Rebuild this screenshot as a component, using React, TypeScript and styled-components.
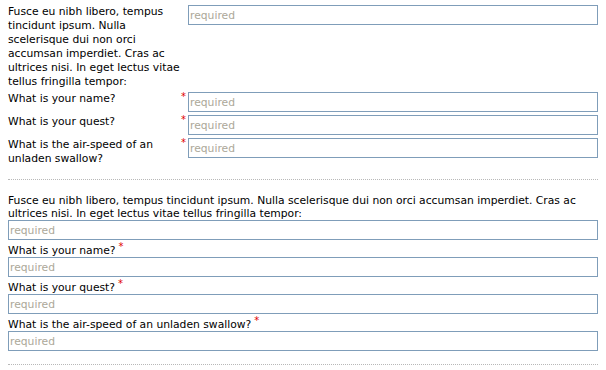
import React from "react";
import styled, { createGlobalStyle } from "styled-components";

const GlobalStyle = createGlobalStyle`
  html, body {
    margin: 0;
    padding: 0;
    background: #ffffff;
  }
  body {
    padding: 5px 8px 0 8px;
    font-family: Tahoma, "DejaVu Sans", Verdana, sans-serif;
    font-size: 10.75px;
    color: #000000;
  }
`;

const Page = styled.div`
  width: 590px;
`;

const TableForm = styled.div`
  display: grid;
  grid-template-columns: 173px 7px 1fr;
  row-gap: 3px;
  align-items: start;
`;

const LabelCell = styled.label`
  line-height: 14px;
`;

const ReqCell = styled.span`
  color: #e00000;
  font-size: 10px;
  line-height: 8px;
  display: block;
  padding-top: 1px;
`;

const TextInput = styled.input`
  box-sizing: border-box;
  width: 100%;
  height: 20px;
  margin: 0;
  padding: 0 1px;
  border: 1px solid #7f9db9;
  border-radius: 0;
  background: #ffffff;
  font-family: Tahoma, "DejaVu Sans", Verdana, sans-serif;
  font-size: 10.75px;
  color: #000;
  outline: none;
  &::placeholder {
    color: #aca899;
    opacity: 1;
  }
`;

const Divider = styled.hr`
  margin: 13px 0 0 0;
  border: 0;
  border-top: 1px dotted #b8b8b8;
  height: 0;
`;

const StackedForm = styled.div`
  display: flex;
  flex-direction: column;
  padding-top: 14px;
`;

const Field = styled.div`
  display: flex;
  flex-direction: column;
`;

const FieldLabel = styled.label<{ $first?: boolean }>`
  line-height: 13px;
  padding-top: ${(p) => (p.$first ? "0" : "4px")};
`;

const Asterisk = styled.span`
  color: #e00000;
  font-size: 10px;
  margin-left: 3px;
  vertical-align: 4px;
  line-height: 0;
`;

const intro =
  "Fusce eu nibh libero, tempus tincidunt ipsum. Nulla scelerisque dui non orci accumsan imperdiet. Cras ac ultrices nisi. In eget lectus vitae tellus fringilla tempor:";

type Q = { label: string; required: boolean };

const questions: Q[] = [
  { label: intro, required: false },
  { label: "What is your name?", required: true },
  { label: "What is your quest?", required: true },
  { label: "What is the air-speed of an unladen swallow?", required: true },
];

export default function App() {
  return (
    <>
      <GlobalStyle />
      <Page>
        <TableForm>
          {questions.map((q, i) => (
            <React.Fragment key={i}>
              <LabelCell>{q.label}</LabelCell>
              <ReqCell>{q.required ? "*" : ""}</ReqCell>
              <TextInput placeholder="required" />
            </React.Fragment>
          ))}
        </TableForm>
        <Divider />
        <StackedForm>
          {questions.map((q, i) => (
            <Field key={i}>
              <FieldLabel $first={i === 0}>
                {q.label}
                {q.required && <Asterisk>*</Asterisk>}
              </FieldLabel>
              <TextInput placeholder="required" />
            </Field>
          ))}
        </StackedForm>
        <Divider />
      </Page>
    </>
  );
}
